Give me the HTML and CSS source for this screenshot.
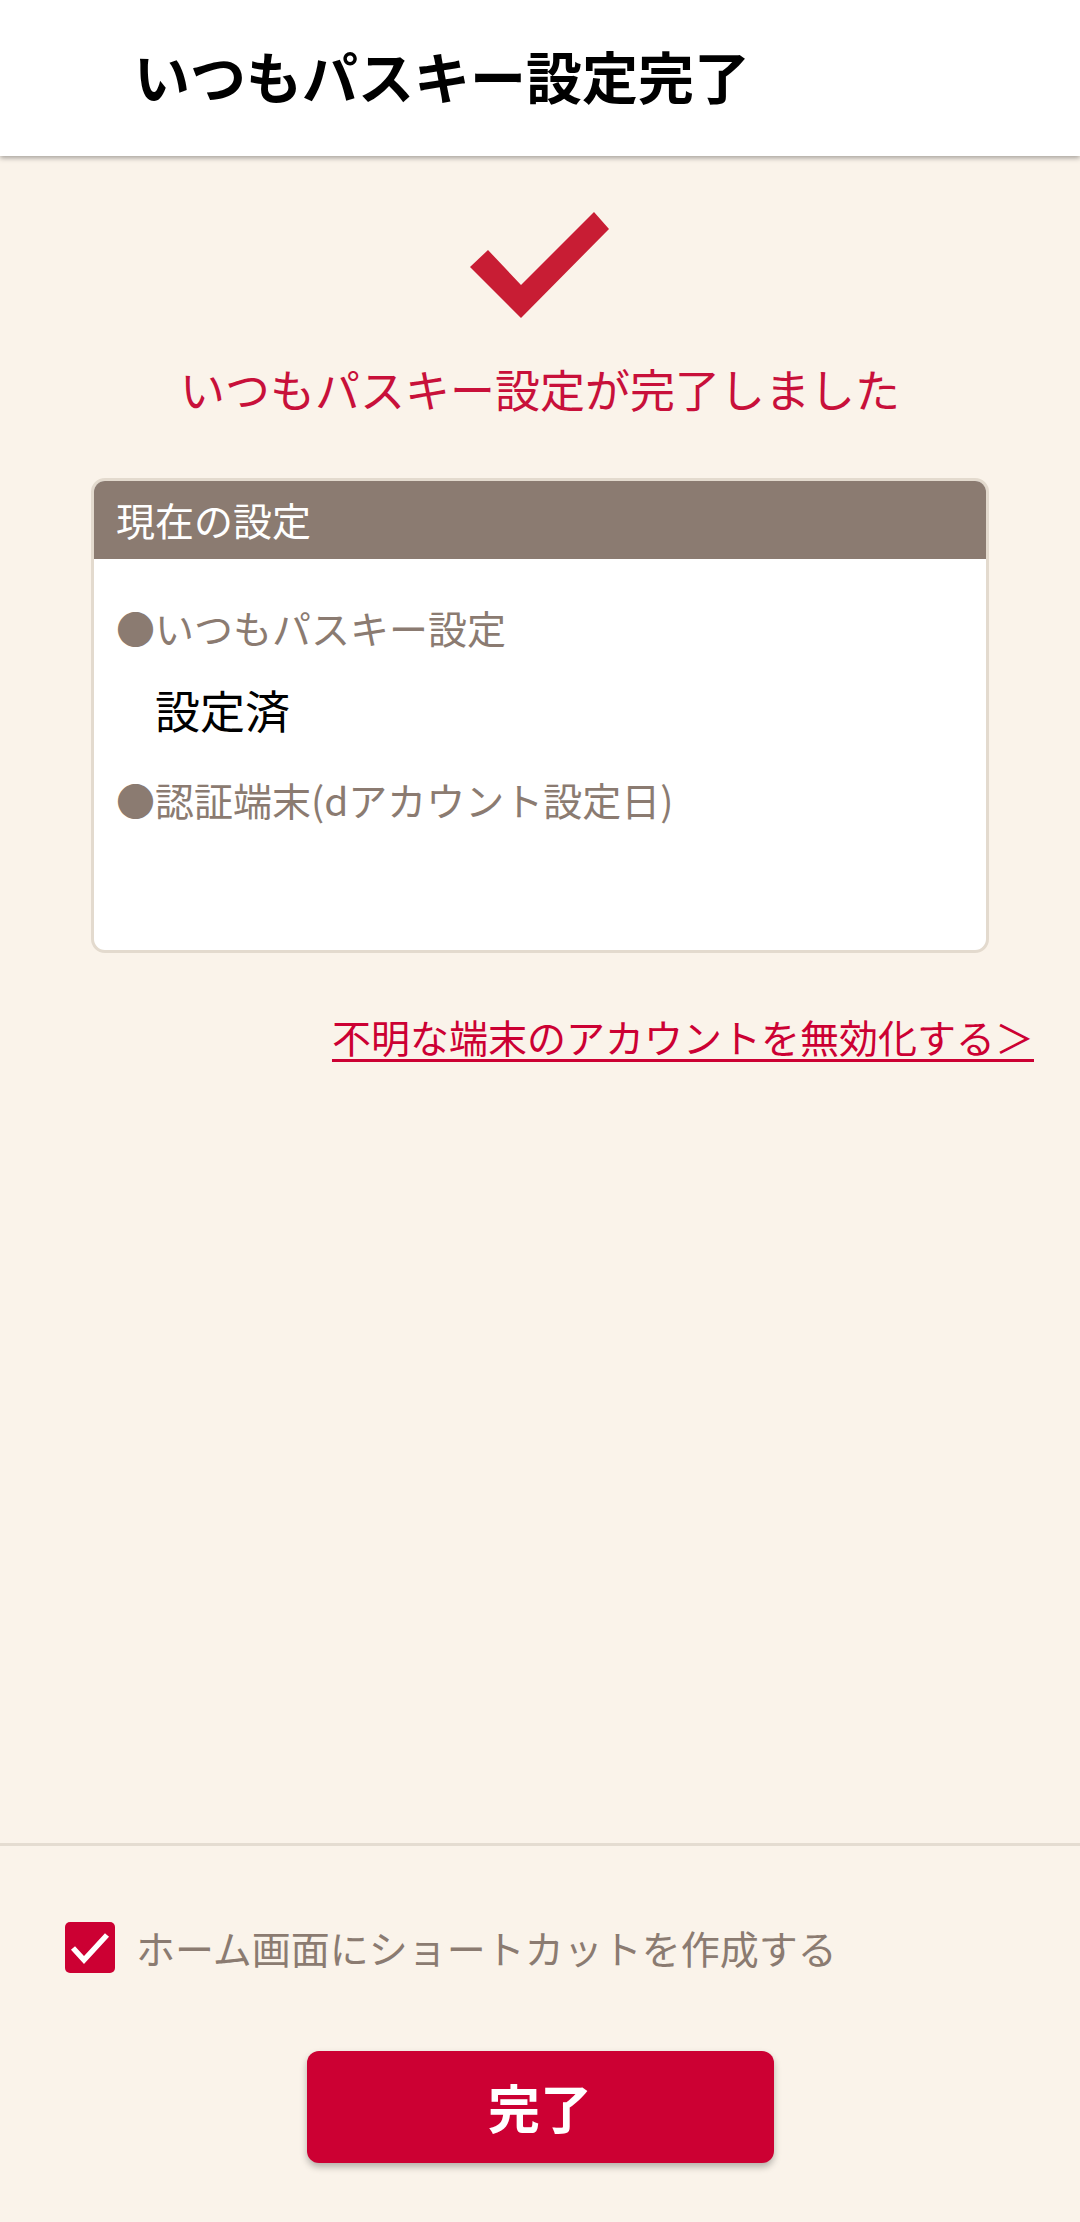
FILE: index.html
```html
<!DOCTYPE html>
<html lang="ja">
<head>
<meta charset="utf-8">
<title>いつもパスキー設定完了</title>
<link rel="stylesheet" href="styles.css">
</head>
<body>
<div class="page">
  <header class="topbar">
    <h1 class="title">いつもパスキー設定完了</h1>
  </header>
  <main class="main">
    <svg class="bigcheck" width="140" height="107" viewBox="0 0 140 107" aria-hidden="true">
      <polygon points="0,55 18,38 51,73 124,0 139,17 51,106" fill="#c81d34"/>
    </svg>
    <p class="message">いつもパスキー設定が完了しました</p>
    <section class="card">
      <div class="card-head">現在の設定</div>
      <div class="card-body">
        <div class="item-label">●いつもパスキー設定</div>
        <div class="item-value">設定済</div>
        <div class="item-label item-label2">●認証端末(dアカウント設定日)</div>
      </div>
    </section>
    <div class="linkrow">
      <a class="link" href="#">不明な端末のアカウントを無効化する＞</a>
    </div>
  </main>
  <footer class="footer">
    <label class="shortcut">
      <span class="checkbox">
        <svg width="50" height="51" viewBox="0 0 50 51" aria-hidden="true">
          <polyline points="8,26 19,38 42,13" fill="none" stroke="#fff" stroke-width="5.5" stroke-linejoin="miter" stroke-linecap="butt"/>
        </svg>
      </span>
      <span class="shortcut-text">ホーム画面にショートカットを作成する</span>
    </label>
    <div class="btnrow">
      <button class="done" type="button">完了</button>
    </div>
  </footer>
</div>
</body>
</html>
```

FILE: styles.css
```css
* { box-sizing: border-box; }
html, body {
  margin: 0;
  padding: 0;
}
body {
  background: #faf3ea;
  font-family: "Noto Sans CJK JP", "Noto Sans", sans-serif;
}
.page {
  display: flex;
  flex-direction: column;
  height: 2222px;
}
.topbar {
  background: #ffffff;
  height: 156px;
  box-shadow: 0 2px 5px rgba(0, 0, 0, 0.35);
  position: relative;
  z-index: 1;
  flex: none;
}
.title {
  margin: 0;
  padding-left: 134px;
  font-size: 56px;
  font-weight: 700;
  line-height: 150px;
  color: #000;
}
.main {
  flex: 1;
  display: flex;
  flex-direction: column;
  align-items: center;
}
.bigcheck {
  display: block;
  margin-top: 56px;
}
.message {
  margin: 40px 0 0;
  font-size: 45px;
  line-height: 60px;
  color: #c8103a;
  text-align: center;
}
.card {
  margin-top: 59px;
  width: 898px;
  background: #fff;
  border: 3px solid #e3dace;
  border-radius: 14px;
  overflow: hidden;
}
.card-head {
  background: #8b7b71;
  color: #fff;
  height: 78px;
  line-height: 76px;
  font-size: 39px;
  padding-left: 22px;
}
.card-body {
  padding: 38px 22px 121px;
}
.item-label {
  font-size: 39px;
  line-height: 60px;
  color: #8b7b71;
}
.item-value {
  margin-top: 23px;
  margin-left: 39px;
  font-size: 45px;
  line-height: 60px;
  color: #000;
}
.item-label2 {
  margin-top: 29px;
}
.linkrow {
  align-self: stretch;
  display: flex;
  justify-content: flex-end;
  padding-right: 46px;
  margin-top: 53px;
}
.link {
  font-size: 39px;
  line-height: 60px;
  color: #cc0033;
  text-decoration: underline;
  text-decoration-thickness: 3px;
  text-underline-offset: 6px;
}
.footer {
  flex: none;
  height: 379px;
  border-top: 3px solid #e4dcd1;
  padding: 71px 0 59px 65px;
  display: flex;
  flex-direction: column;
}
.shortcut {
  display: flex;
  align-items: center;
  height: 60px;
}
.checkbox {
  width: 50px;
  height: 51px;
  background: #cc0033;
  border-radius: 5px;
  display: flex;
}
.shortcut-text {
  margin-left: 21px;
  font-size: 39px;
  line-height: 60px;
  color: #8b7b71;
}
.btnrow {
  margin-top: 74px;
  margin-left: -65px;
  display: flex;
  justify-content: center;
}
.done {
  width: 467px;
  height: 112px;
  border: none;
  border-radius: 12px;
  background: #cc0033;
  color: #fff;
  font-family: "Noto Sans CJK JP", "Noto Sans", sans-serif;
  font-size: 52px;
  font-weight: 700;
  line-height: 1;
  padding: 0;
  box-shadow: 0 4px 7px rgba(0, 0, 0, 0.28);
}
```
